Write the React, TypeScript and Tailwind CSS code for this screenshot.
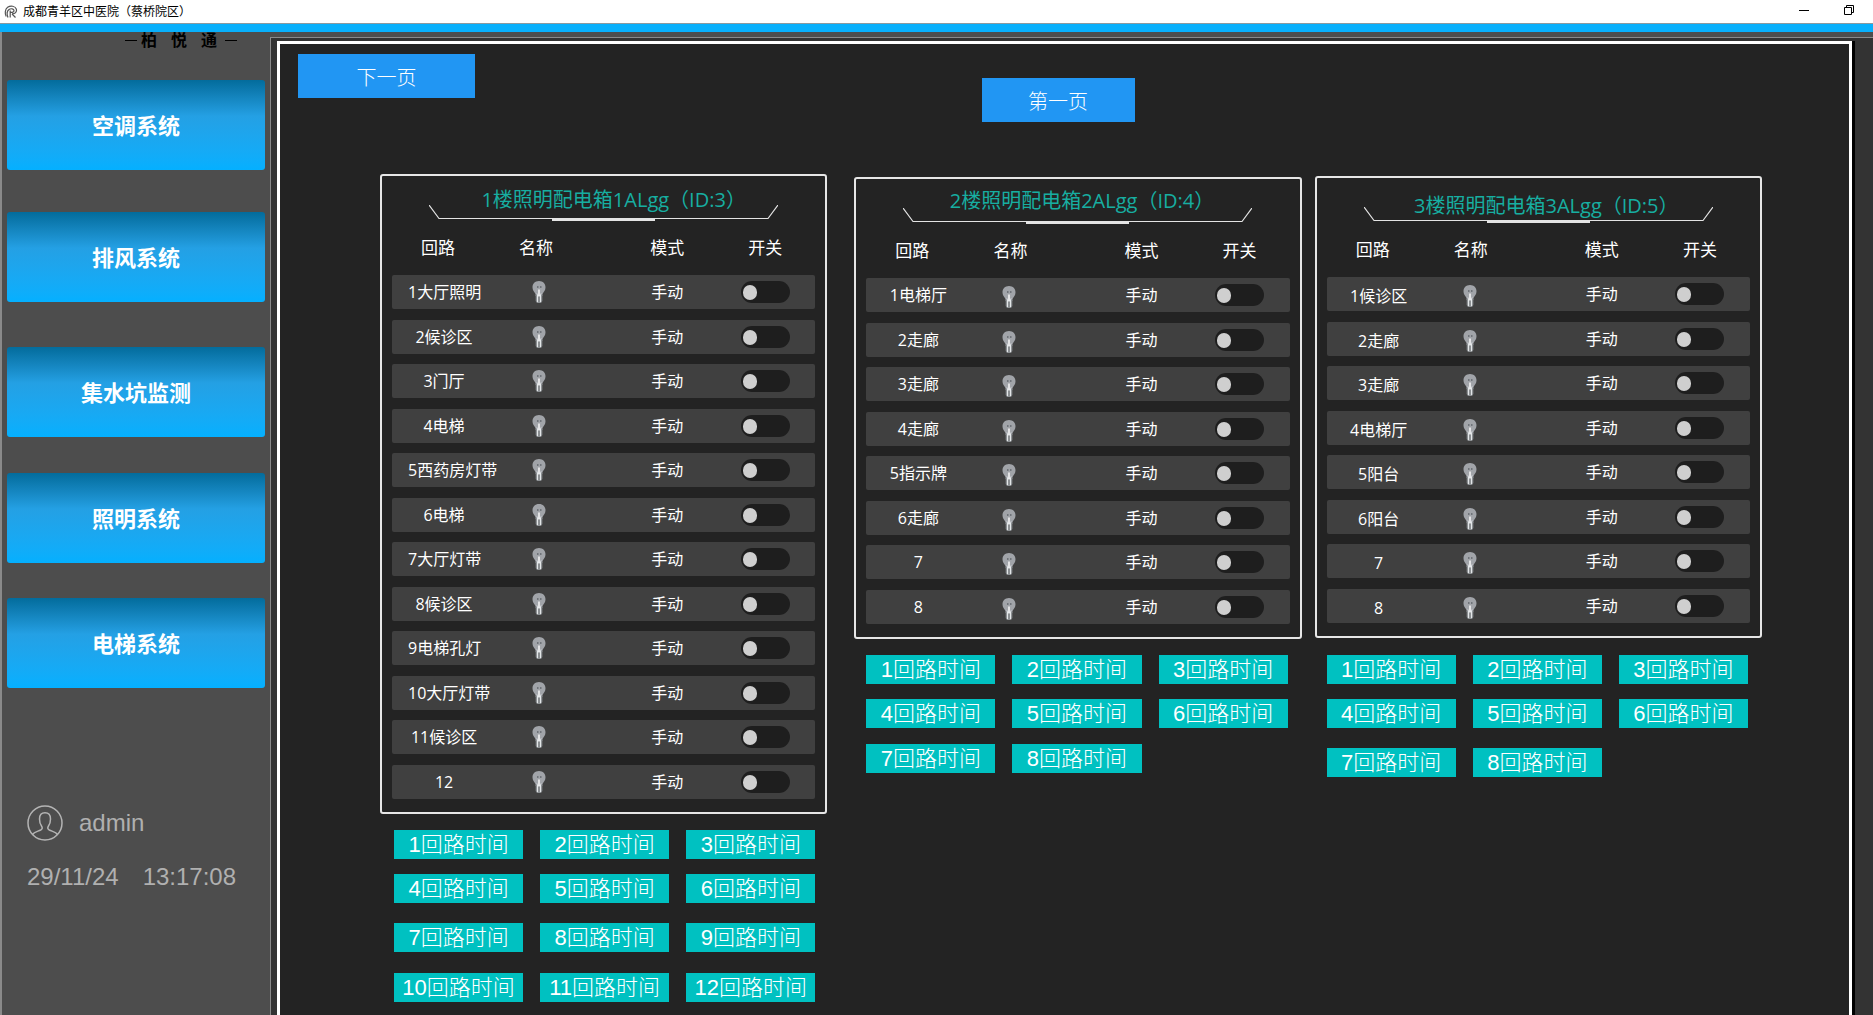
import { useState } from "react";
import { clsx } from "clsx";

type ButtonRow = { className: string; ids: number[] };

type PanelData = {
  title: string;
  floor: string;
  className: string;
  titleClass: string;
  labelClass: string;
  bulbClass: string;
  timeClass: string;
  circuits: string[];
  timeRows: ButtonRow[];
};

const navItems = [
  { name: "空调系统", className: "mt-8" },
  { name: "排风系统", className: "mt-[42px]" },
  { name: "集水坑监测", className: "mt-[45px]" },
  { name: "照明系统", className: "mt-9" },
  { name: "电梯系统", className: "mt-[35px]" },
];

const panels: PanelData[] = [
  {
    title: "1楼照明配电箱1ALgg（ID:3）",
    floor: "1",
    className: "",
    titleClass: "pt-3 pl-5",
    labelClass: "",
    bulbClass: "",
    timeClass: "pl-[14px] pr-3",
    circuits: [
      "1大厅照明",
      "2候诊区",
      "3门厅",
      "4电梯",
      "5西药房灯带",
      "6电梯",
      "7大厅灯带",
      "8候诊区",
      "9电梯孔灯",
      "10大厅灯带",
      "11候诊区",
      "12",
    ],
    timeRows: [
      { className: "mt-4", ids: [1, 2, 3] },
      { className: "mt-[15px]", ids: [4, 5, 6] },
      { className: "mt-5", ids: [7, 8, 9] },
      { className: "mt-[21px]", ids: [10, 11, 12] },
    ],
  },
  {
    title: "2楼照明配电箱2ALgg（ID:4）",
    floor: "2",
    className: "mt-[3px] ml-[27px]",
    titleClass: "pt-[10px] pl-2",
    labelClass: "",
    bulbClass: "pt-1 pr-2",
    timeClass: "pl-3 pr-[14px]",
    circuits: ["1电梯厅", "2走廊", "3走廊", "4走廊", "5指示牌", "6走廊", "7", "8"],
    timeRows: [
      { className: "mt-4", ids: [1, 2, 3] },
      { className: "mt-[15px]", ids: [4, 5, 6] },
      { className: "mt-4", ids: [7, 8] },
    ],
  },
  {
    title: "3楼照明配电箱3ALgg（ID:5）",
    floor: "3",
    className: "mt-[2px] ml-[13px]",
    titleClass: "pt-4 pl-4",
    labelClass: "pt-1",
    bulbClass: "pt-1 pr-2",
    timeClass: "pl-3 pr-[14px]",
    circuits: ["1候诊区", "2走廊", "3走廊", "4电梯厅", "5阳台", "6阳台", "7", "8"],
    timeRows: [
      { className: "mt-[17px]", ids: [1, 2, 3] },
      { className: "mt-[15px]", ids: [4, 5, 6] },
      { className: "mt-5", ids: [7, 8] },
    ],
  },
];

const columns =
  "grid grid-cols-[minmax(0,104fr)_minmax(0,86fr)_minmax(0,133fr)_minmax(0,100fr)] items-center";

function AppLogo() {
  return (
    <svg className="h-[14px] w-[14px]" viewBox="0 0 14 14" fill="none" stroke="#555" strokeWidth="1.2">
      <path d="M2.2 11.5C.6 8.500 1 4.200 3.600 2.300 6.500.300 11.300.800 12.400 4.200c.800 2.800-1.400 4.800-4.400 4.600" />
      <path d="M4 12.500C2.800 9.500 3 6 5 4.500c1.900-1.300 4.900-.800 5 1.100.1 1.500-1.600 1.900-4 1.700" />
      <path d="M6.200 5.500v7M8 9l3.500 3.500" />
    </svg>
  );
}

function UserIcon() {
  return (
    <svg className="h-9 w-9" viewBox="0 0 36 36" fill="none" stroke="#b4b4b4" strokeWidth="1.5">
      <circle cx="18" cy="18" r="17" />
      <path d="M5.500 29.500c1.500-2.500 5-3 8.200-4.500 2-1 1.800-2.500.8-4-1.300-1.800-2-3.800-2-7 0-4 2.200-6.200 5.500-6.200s5.500 2.200 5.500 6.200c0 3.200-.7 5.200-2 7-1 1.500-1.200 3 .8 4 3.200 1.500 6.700 2 8.200 4.500" />
    </svg>
  );
}

function Bulb() {
  return (
    <svg className="h-[22px] w-[14px]" viewBox="0 0 14 22">
      <path d="M7 0C3 0 .5 2.800.5 6.200c0 2.800 1.500 4.300 2.600 6 .5.800.6 1.800.6 2.800h6.600c0-1 .1-2 .6-2.800 1.100-1.700 2.600-3.200 2.600-6C13.500 2.800 11 0 7 0Z" fill="#a1a4a9" />
      <path d="M3.700 14h6.600v6L9 22H5l-1.300-2Z" fill="#8c9093" />
      <path d="M5.500 14v7M8.500 14v7" stroke="#e3e6e8" strokeWidth="1" />
      <path d="M7 8.500v7" stroke="#fff" strokeWidth="1.400" />
      <path d="M5 12.500 7 15l2-2.500" stroke="#e8ebee" strokeWidth="1" fill="none" />
      <path d="M5 6h1.500M8 6h1.500" stroke="#40454c" strokeWidth="1.200" />
    </svg>
  );
}

function TitleFrame() {
  return (
    <svg className="h-4 w-[349px]" viewBox="0 0 349 16" fill="none" stroke="#e4e4e4">
      <path d="M0 0 10 13.500H339L349 0" strokeWidth="1.200" />
      <path d="M123 14.500H226" strokeWidth="3" />
    </svg>
  );
}

function TitleBar() {
  return (
    <header className="flex h-[23px] items-center justify-between bg-white pr-[19px] pl-1 text-black">
      <div className="flex items-center gap-[5px]">
        <AppLogo />
        <h1 className="text-xs">成都青羊区中医院（蔡桥院区）</h1>
      </div>
      <div className="flex items-center gap-[35px] pb-[3px]">
        <button aria-label="最小化">
          <svg className="h-[10px] w-[10px]" viewBox="0 0 10 10" stroke="#000">
            <path d="M0 5.500H10" />
          </svg>
        </button>
        <button aria-label="还原">
          <svg className="h-[10px] w-[10px]" viewBox="0 0 10 10" fill="none" stroke="#000">
            <path d="M.5 2.500h7v7h-7zM2.500 2V.500h7v7H8" />
          </svg>
        </button>
      </div>
    </header>
  );
}

function Sidebar() {
  return (
    <aside className="w-[270px] shrink-0 border-l-2 border-[#8a8a8a] px-[5px]">
      <div className="flex h-4 items-center justify-end gap-[14px] pr-7 text-base leading-4 font-bold text-black">
        <div className="flex items-center gap-1">
          <span className="h-px w-3 bg-black" />
          <span>柏</span>
        </div>
        <span>悦</span>
        <div className="flex items-center gap-2">
          <span>通</span>
          <span className="h-px w-3 bg-black" />
        </div>
      </div>

      <nav className="flex flex-col">
        {navItems.map((item) => (
          <button
            key={item.name}
            className={clsx(
              "h-[90px] rounded-[3px] bg-linear-to-b from-[#036c9c] via-[#24a0e4] via-40% to-[#04b0ff] text-[22px] font-bold text-white",
              item.className
            )}
          >
            {item.name}
          </button>
        ))}
      </nav>

      <div className="mt-[117px] pl-5 font-[Liberation_Sans,sans-serif] text-2xl text-[#b0b0b0]">
        <div className="flex items-center gap-4">
          <UserIcon />
          <span>admin</span>
        </div>
        <div className="mt-5 flex gap-6">
          <span>29/11/24</span>
          <span>13:17:08</span>
        </div>
      </div>
    </aside>
  );
}

function CircuitRow({ name, panel }: { name: string; panel: PanelData }) {
  const [on, setOn] = useState(false);

  return (
    <tr
      className={clsx(
        columns,
        "h-[34px] rounded-[2px] bg-[#404040] not-last:odd:mb-[11px] not-last:even:mb-[10px]"
      )}
    >
      <td className={clsx("px-4 text-center whitespace-nowrap", panel.labelClass)}>{name}</td>
      <td className={clsx("flex justify-center", panel.bulbClass)}>
        <Bulb />
      </td>
      <td className="pl-[37px] text-center">手动</td>
      <td className="flex justify-center">
        <input
          type="checkbox"
          aria-label={`${panel.floor}楼 ${name}`}
          checked={on}
          onChange={(e) => setOn(e.target.checked)}
          className="flex h-[22px] w-[49px] appearance-none items-center rounded-full bg-[#1e1e1e] px-[2px] before:h-[15px] before:w-[14px] before:rounded-full before:bg-[#cfcfcf] checked:justify-end"
        />
      </td>
    </tr>
  );
}

function Panel({ panel }: { panel: PanelData }) {
  return (
    <section className={clsx("min-w-0 flex-1", panel.className)}>
      <div className="rounded-[3px] border-2 border-[#e6e6e6] px-[10px] pb-[13px]">
        <div className="grid h-[45px] justify-items-center">
          <h2 className={clsx("col-start-1 row-start-1 text-xl leading-6 text-[#17aea1]", panel.titleClass)}>
            {panel.title}
          </h2>
          <div className="col-start-1 row-start-1 self-end">
            <TitleFrame />
          </div>
        </div>

        <table className="block text-base leading-6">
          <thead className="block py-[15px] text-[17px]">
            <tr className={columns}>
              <th className="pr-3 font-normal">回路</th>
              <th className="pr-[6px] font-normal">名称</th>
              <th className="pl-[37px] font-normal">模式</th>
              <th className="font-normal">开关</th>
            </tr>
          </thead>
          <tbody className="block">
            {panel.circuits.map((name) => (
              <CircuitRow key={name} name={name} panel={panel} />
            ))}
          </tbody>
        </table>
      </div>

      {/* Time schedule buttons */}
      <div className={panel.timeClass}>
        {panel.timeRows.map((row) => (
          <div key={row.ids[0]} className={clsx("grid grid-cols-3 gap-x-[17px]", row.className)}>
            {row.ids.map((id) => (
              <button
                key={id}
                className="h-[29px] bg-[#00c1c1] font-[Liberation_Sans,Noto_Sans_CJK_SC,sans-serif] text-[22px] leading-7 font-light whitespace-nowrap text-white"
              >
                {id}回路时间
              </button>
            ))}
          </div>
        ))}
      </div>
    </section>
  );
}

export default function App() {
  return (
    <div className="flex min-h-screen flex-col bg-[#4d4d4d] font-[Open_Sans,Noto_Sans_CJK_SC,sans-serif] text-white">
      <TitleBar />
      <div className="h-[9px] border-t border-[#8a9aa0] bg-[#08b0fc]" />

      <div className="flex flex-1">
        <Sidebar />

        <div className="mt-[5px] flex min-w-0 flex-1 border-t border-l border-[#8a8a8a] bg-[#333] pt-[3px] pr-[18px] pl-[6px]">
          <main className="min-w-0 flex-1 border-3 border-b-0 border-white bg-[#232323]">
            <div className="flex h-[130px] items-start pt-[10px] pl-[18px] text-xl font-light">
              <button className="h-11 w-[177px] bg-[#2196f3] pt-1">下一页</button>
              <div className="flex flex-1 justify-center pt-6 pr-[208px]">
                <button className="h-11 w-[153px] bg-[#2196f3] pt-1">第一页</button>
              </div>
            </div>

            <div className="flex items-start pr-[87px] pl-[100px]">
              {panels.map((panel) => (
                <Panel key={panel.floor} panel={panel} />
              ))}
            </div>
          </main>
          <div className="w-[3px] bg-black" />
        </div>
      </div>
    </div>
  );
}
